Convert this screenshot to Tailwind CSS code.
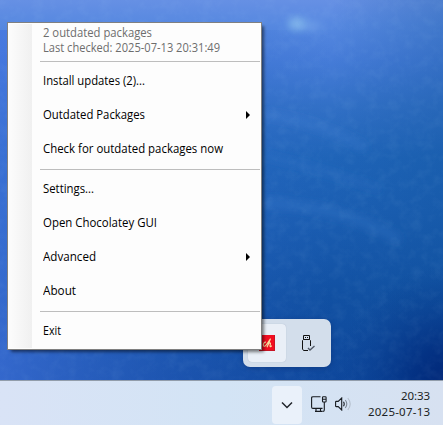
<!DOCTYPE html>
<html lang="en">
<head>
<meta charset="utf-8">
<title>Tray menu</title>
<script src="https://cdn.jsdelivr.net/npm/@tailwindcss/browser@4"></script>
</head>
<body class="relative flex h-[425px] w-[443px] flex-col overflow-hidden bg-[#1c5ab5] font-['Open_Sans','Noto_Sans',sans-serif] text-[12px]">
  <!-- wallpaper -->
  <svg class="absolute inset-0" width="443" height="425" viewBox="0 0 443 425">
    <defs>
      <linearGradient id="base" x1="0" y1="0" x2="0" y2="1">
        <stop offset="0" stop-color="#6690e4"/><stop offset=".06" stop-color="#5688e0"/><stop offset=".14" stop-color="#467cd8"/><stop offset=".25" stop-color="#3270c6"/><stop offset=".37" stop-color="#1f64b8"/><stop offset=".5" stop-color="#1b5eb2"/><stop offset=".7" stop-color="#1150a2"/><stop offset=".9" stop-color="#0e479c"/>
      </linearGradient>
      <linearGradient id="left" x1="0" x2="1"><stop offset="0" stop-color="#4475e0" stop-opacity=".7"/><stop offset=".75" stop-color="#3068cc" stop-opacity="0"/></linearGradient>
      <linearGradient id="right" x1="0.75" x2="1"><stop offset="0" stop-color="#0f5299" stop-opacity="0"/><stop offset="1" stop-color="#0f5299" stop-opacity=".3"/></linearGradient>
      <radialGradient id="deep" gradientUnits="userSpaceOnUse" cx="453" cy="385" r="120"><stop offset="0" stop-color="#002474"/><stop offset=".35" stop-color="#002a7c" stop-opacity=".75"/><stop offset="1" stop-color="#0a3f92" stop-opacity="0"/></radialGradient>
      <filter id="s" x="-50%" y="-200%" width="200%" height="500%"><feGaussianBlur stdDeviation="4"/></filter>
      <filter id="n" x="0" y="0" width="100%" height="100%"><feTurbulence type="fractalNoise" baseFrequency=".09 .1" numOctaves="3" seed="4"/><feColorMatrix values="0 0 0 0 .5  0 0 0 0 .75  0 0 0 0 .95  1.2 0 0 0 -.5"/></filter>
    </defs>
    <rect width="443" height="425" fill="url(#base)"/>
    <rect y="30" width="443" height="395" fill="url(#left)"/>
    <rect width="443" height="425" fill="url(#right)"/>
    <rect width="443" height="425" fill="url(#deep)"/>
    <ellipse cx="297" cy="24" rx="9" ry="6" fill="#8bc0ee" opacity=".9" filter="url(#s)"/>
    <ellipse cx="312" cy="26" rx="10" ry="4" fill="#83b0ee" opacity=".6" filter="url(#s)"/>
    <g fill="none" stroke="#4f8bdc" filter="url(#s)">
      <path d="M262 114Q320 122 365 148" stroke-width="5" opacity=".35"/>
      <path d="M262 155Q320 168 380 190" stroke-width="5" opacity=".2"/>
      <path d="M262 203Q340 205 400 240" stroke-width="8" opacity=".25"/>
    </g>
    <rect width="443" height="425" filter="url(#n)" opacity=".1"/>
  </svg>

  <!-- overflow flyout -->
  <div class="absolute left-[243px] top-[319px] flex h-12 w-[88px] items-center rounded-[7px] bg-[#d3deeb] px-[5px] shadow-[0_1px_5px_rgba(0,25,80,0.35)]">
    <div class="flex h-[38px] w-[38px] items-center justify-end rounded-[4px] bg-[#e9eff7] pr-[11px] shadow-[0_0_1px_rgba(90,110,140,0.4)]">
      <svg width="16" height="16" viewBox="0 0 16 16">
        <rect width="16" height="16" fill="#f20d20"/>
        <path d="M0 15.5h16M15.5 0v16" stroke="#c81424"/>
        <path d="M7 7.3C5.4 6.6 3.9 9 4.4 10.6c.5 1.4 2 .6 3.2-1.1L11.6 3.6M11.4 4L8 12.3c1-2.7 2.4-4.7 3.3-4.4.9.4-.9 3-.2 3.6.5.3 1.1-.2 1.6-.9" fill="none" stroke="#f8dfa0" stroke-width="1.1"/>
      </svg>
    </div>
    <svg class="ml-[16px]" width="13" height="16" viewBox="0 0 13 16" fill="none">
      <path d="M1.5 4.5V.5h6v4M.5 14V5.5L1.5 4.5h6l1 1V11M.5 14l1 1.5H6" stroke="#111"/>
      <path d="M3 2.5h1M5 2.5h1" stroke="#111"/>
      <path d="M6 13l2 2 4.5-4" stroke="#515966" stroke-width="1.4"/>
    </svg>
  </div>

  <!-- taskbar -->
  <div class="relative mt-auto flex h-[45px] shrink-0 items-center border-t border-[#929dab] bg-linear-to-r from-[#d9e3f6] via-[#d3e4f5] to-[#d7e1f1] pl-[272px] text-[#1c1f24]">
    <div class="mt-[3px] flex h-[38px] w-[30px] items-center justify-center rounded-[4px] bg-[#eaf1fa]">
      <svg width="12" height="8" viewBox="0 0 12 8" fill="none"><path d="M1 1.5l5 5 5-5" stroke="#20242a" stroke-width="1.5"/></svg>
    </div>
    <svg class="ml-[9px] mt-[2px]" width="16" height="16" viewBox="0 0 16 16" fill="none" stroke="#171b20" stroke-width="1.1">
      <path d="M9.5.7H2Q.6.7.6 2v9q0 1.4 1.4 1.4h9.5M5 12.5v2.8M9.5 12.5v2.8M4 15.4h7.5M11.5 1.5v3.7q0 .8.8.8h2q.8 0 .8-.8V1.5q0-.8-.8-.8h-2q-.8 0-.8.8ZM11.5 3.3h3.6M13.3 6v8q0 1.4-1.5 1.4"/>
    </svg>
    <svg class="ml-[8px] mt-[2px]" width="17" height="14" viewBox="0 0 17 14" fill="none" stroke="#171b20" stroke-width="1.1">
      <path d="M.6 5q0-.6.6-.6h2L6.7 1v12L3.2 9.6h-2q-.6 0-.6-.6ZM8.5 4.8q1.4 2.2 0 4.4"/>
      <path d="M10.3 3q3 4 0 8" stroke="#7f8995"/>
      <path d="M12.8 1q4.8 6 0 12" stroke="#b4bfcc"/>
    </svg>
    <div class="ml-auto mr-[13px] mt-px flex flex-col items-end font-['Noto_Sans'] text-[11.5px] leading-4">
      <svg class="block overflow-visible" width="62" height="16"><text x="33" y="12" textLength="29" fill="currentColor">20:33</text></svg>
      <svg class="block overflow-visible" width="62" height="16"><text x="0" y="12" textLength="62" fill="currentColor">2025-07-13</text></svg>
    </div>
  </div>

  <!-- context menu -->
  <div class="absolute left-[7px] top-[22px] flex h-[328px] w-[255px] flex-col border border-[#808080] bg-[#fdfdfd] py-px text-[12px] text-black shadow-[3px_3px_3px_-1px_rgba(0,0,0,0.5)]">
    <div class="absolute left-px top-px h-[324px] w-[23px] bg-linear-to-r from-[#fcfcfc] to-[#f0f0f0]"></div>
    <div class="relative flex h-[34px] flex-col pl-[35px] pt-[2px] text-[#6d6d6d]">
      <svg class="block overflow-visible" width="200" height="15"><text x="0" y="11" textLength="109" lengthAdjust="spacingAndGlyphs" fill="currentColor">2 outdated packages</text></svg>
      <svg class="block overflow-visible" width="200" height="15"><text x="0" y="11" textLength="177" lengthAdjust="spacingAndGlyphs" fill="currentColor">Last checked: 2025-07-13 20:31:49</text></svg>
    </div>
    <div class="my-auto ml-8 mr-px h-px bg-[#bdbdbd]"></div>
    <div class="flex h-[34px] items-center pl-[35px]"><svg width="200" height="16"><text x="0" y="12" textLength="102" lengthAdjust="spacingAndGlyphs">Install updates (2)...</text></svg></div>
    <div class="flex h-[34px] items-center pl-[35px]"><svg width="200" height="16"><text x="0" y="12" textLength="102" lengthAdjust="spacingAndGlyphs">Outdated Packages</text></svg><svg class="ml-[3px]" width="4" height="8" viewBox="0 0 4 8"><path d="M0 0l4 4-4 4z"/></svg></div>
    <div class="flex h-[34px] items-center pl-[35px]"><svg width="200" height="16"><text x="0" y="12" textLength="180" lengthAdjust="spacingAndGlyphs">Check for outdated packages now</text></svg></div>
    <div class="my-auto ml-8 mr-px h-px bg-[#bdbdbd]"></div>
    <div class="flex h-[34px] items-center pl-[35px]"><svg width="200" height="16"><text x="0" y="12" textLength="51" lengthAdjust="spacingAndGlyphs">Settings...</text></svg></div>
    <div class="flex h-[34px] items-center pl-[35px]"><svg width="200" height="16"><text x="0" y="12" textLength="114" lengthAdjust="spacingAndGlyphs">Open Chocolatey GUI</text></svg></div>
    <div class="flex h-[34px] items-center pl-[35px]"><svg width="200" height="16"><text x="0" y="12" textLength="53" lengthAdjust="spacingAndGlyphs">Advanced</text></svg><svg class="ml-[3px]" width="4" height="8" viewBox="0 0 4 8"><path d="M0 0l4 4-4 4z"/></svg></div>
    <div class="flex h-[34px] items-center pl-[35px]"><svg width="200" height="16"><text x="0" y="12" textLength="33" lengthAdjust="spacingAndGlyphs">About</text></svg></div>
    <div class="my-auto ml-8 mr-px h-px bg-[#bdbdbd]"></div>
    <div class="flex h-[34px] items-center pl-[35px]"><svg width="200" height="16"><text x="0" y="12" textLength="18" lengthAdjust="spacingAndGlyphs">Exit</text></svg></div>
  </div>
</body>
</html>
